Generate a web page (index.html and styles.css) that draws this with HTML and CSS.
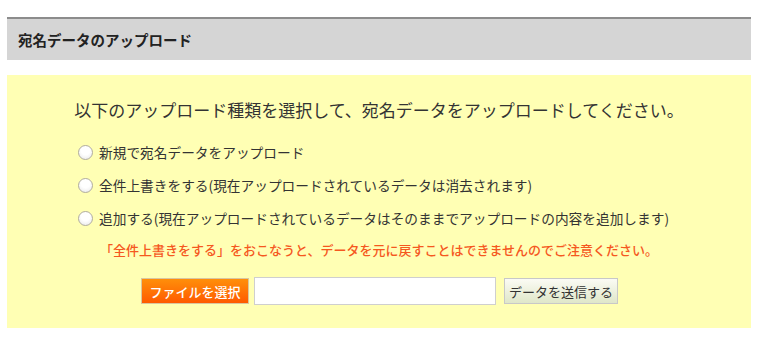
FILE: index.html
```
<!DOCTYPE html>
<html lang="ja">
<head>
	<meta charset="utf-8">
	<title>宛名データのアップロード</title>
	<link rel="stylesheet" href="styles.css">
</head>
<body>
<div class="page">
	<div class="head">宛名データのアップロード</div>

	<form class="panel">
		<p class="lead">以下のアップロード種類を選択して、宛名データをアップロードしてください。</p>

		<div class="choices">
			<label class="choice"><input type="radio" name="mode"> 新規で宛名データをアップロード</label>
			<label class="choice"><input type="radio" name="mode"> 全件上書きをする(現在アップロードされているデータは消去されます)</label>
			<label class="choice"><input type="radio" name="mode"> 追加する(現在アップロードされているデータはそのままでアップロードの内容を追加します)</label>
		</div>

		<p class="warn">「全件上書きをする」をおこなうと、データを元に戻すことはできませんのでご注意ください。</p>

		<div class="send">
			<button type="button" class="pick">ファイルを選択</button>
			<input type="text" class="fname">
			<button type="button" class="submit">データを送信する</button>
		</div>
	</form>
</div>
</body>
</html>
```

FILE: styles.css
```
body {
    margin: 0;
    font-family: "Noto Sans CJK JP", "Noto Sans", sans-serif;
    color: #333;
    background: #fff;
}

.page {
    width: 744px;
    margin-left: 7px;
    padding-top: 17px;
}

.head {
    height: 41px;
    line-height: 41px;
    padding-left: 11px;
    border-top: 2px solid #8c8c8c;
    background: #d5d5d5;
    font-size: 14.5px;
    font-weight: bold;
    color: #222;
}

.panel {
    margin-top: 15px;
    padding: 23px 0 23px;
    background: #ffffb4;
}

.lead {
    margin: 0;
    font-size: 17px;
    line-height: 24px;
    text-align: center;
}

.choices {
    display: flex;
    flex-direction: column;
    gap: 13px;
    padding-left: 71px;
    margin-top: 20px;
}

.choice {
    display: flex;
    align-items: center;
    gap: 6px;
    height: 20px;
    font-size: 13.7px;
}

.choice input {
    appearance: none;
    -webkit-appearance: none;
    width: 15px;
    height: 15px;
    margin: 0;
    border: 1px solid #b0aca0;
    border-radius: 50%;
    background: radial-gradient(circle at 50% 35%, #fff 40%, #e6e6e6 100%);
}

.warn {
    margin: 12px 0 0;
    font-size: 13px;
    line-height: 20px;
    font-weight: 500;
    color: #f5581f;
    text-align: center;
}

.send {
    display: flex;
    justify-content: center;
    align-items: center;
    margin-top: 17px;
    padding-left: 1px;
}

.pick {
    width: 108px;
    height: 26px;
    padding: 0;
    margin-right: 5px;
    border: 1px solid #d9c6a0;
    background: linear-gradient(#ff8f0a, #ff5a00);
    color: #fff;
    font-family: inherit;
    font-size: 13px;
    font-weight: 500;
}

.fname {
    width: 242px;
    height: 28px;
    box-sizing: border-box;
    margin: 0 8px 0 0;
    border: 1px solid #cfcfcf;
    background: #fff;
}

.submit {
    width: 114px;
    height: 26px;
    padding: 0;
    white-space: nowrap;
    border: 1px solid #c8c8c8;
    background: linear-gradient(#fbfbf4, #dfe7c9);
    color: #333;
    font-family: inherit;
    font-size: 13px;
}
```
